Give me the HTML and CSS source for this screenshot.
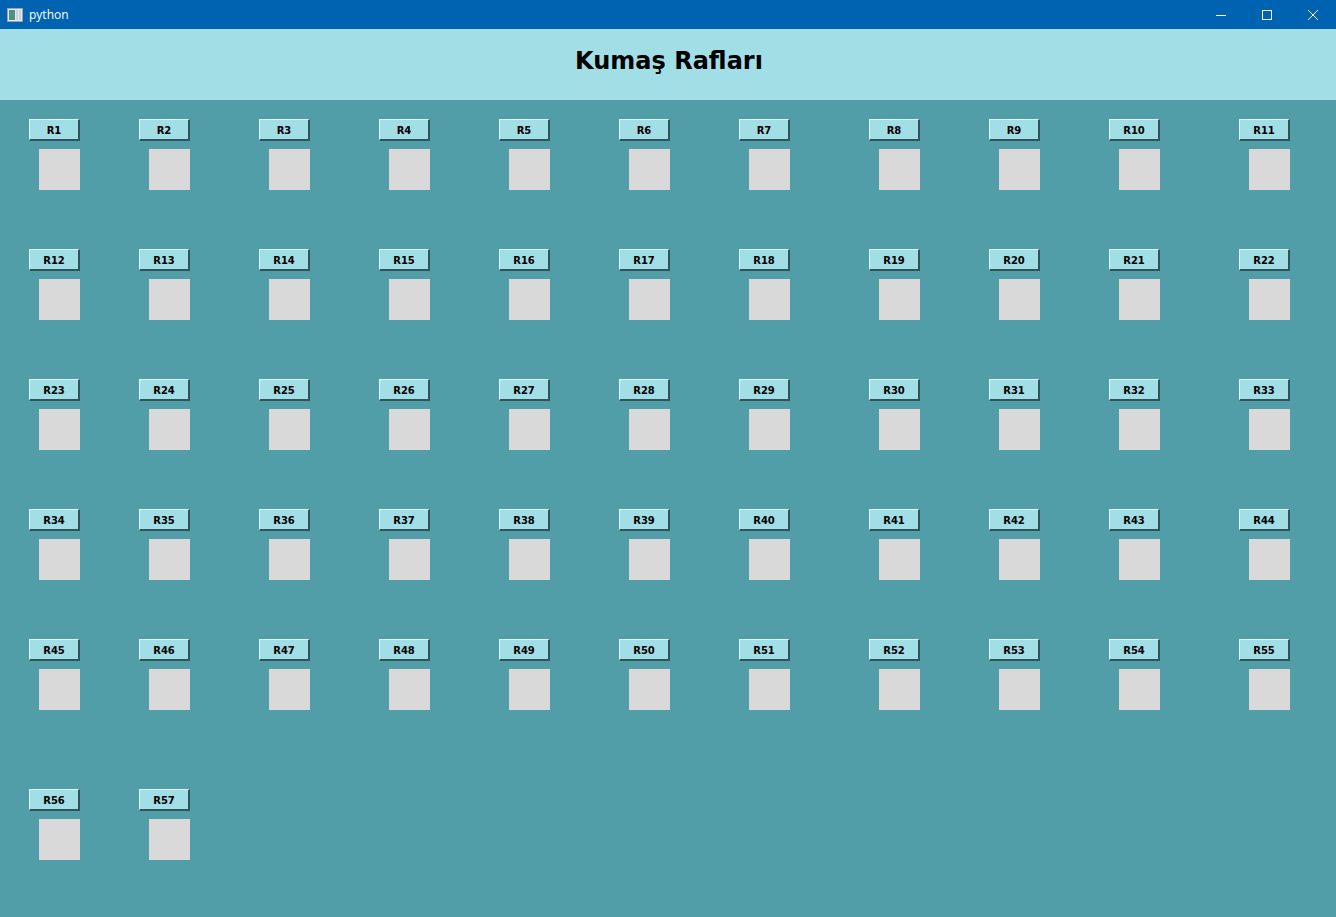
FILE: index.html
```html
<!DOCTYPE html>
<html lang="tr">
<head>
<meta charset="utf-8">
<title>python</title>
<link rel="stylesheet" href="styles.css">
</head>
<body>
<div class="titlebar">
  <div class="tb-left">
    <svg class="app-icon" width="16" height="14" viewBox="0 0 16 14">
      <rect x="0.5" y="0.5" width="15" height="13" fill="#e8e8e8" stroke="#9aa4ad"/>
      <rect x="2" y="2" width="6" height="10" fill="#4f8f8a"/>
      <rect x="9" y="2" width="2" height="10" fill="#c9d3dc"/>
      <rect x="12" y="2" width="2" height="10" fill="#c9d3dc"/>
    </svg>
    <span class="tb-title">python</span>
  </div>
  <div class="tb-controls">
    <div class="tb-btn"><svg width="10" height="10" viewBox="0 0 10 10"><path d="M0 5.5H10" stroke="#fff" stroke-width="1"/></svg></div>
    <div class="tb-btn"><svg width="10" height="10" viewBox="0 0 10 10"><rect x="0.5" y="0.5" width="9" height="9" fill="none" stroke="#fff" stroke-width="1"/></svg></div>
    <div class="tb-btn"><svg width="10" height="10" viewBox="0 0 10 10"><path d="M0 0L10 10M10 0L0 10" stroke="#fff" stroke-width="1"/></svg></div>
  </div>
</div>
<header class="header">
  <h1 class="title">Kumaş Rafları</h1>
</header>
<main class="shelves" id="shelves"></main>
<script src="script.js"></script>
</body>
</html>
```
FILE: styles.css
```css
html, body {
  margin: 0;
  padding: 0;
}
body {
  width: 1336px;
  height: 917px;
  overflow: hidden;
  background: #519da8;
  font-family: "DejaVu Sans", Verdana, sans-serif;
}
.titlebar {
  height: 29px;
  background: #0063b1;
  display: flex;
  justify-content: space-between;
  align-items: center;
  color: #fff;
}
.tb-left {
  display: flex;
  align-items: center;
  padding-left: 7px;
  gap: 6px;
}
.app-icon {
  display: block;
}
.tb-title {
  font-family: "Open Sans", "Noto Sans", sans-serif;
  font-size: 12px;
  color: #fff;
}
.tb-controls {
  display: flex;
  height: 29px;
}
.tb-btn {
  width: 46px;
  height: 29px;
  display: flex;
  align-items: center;
  justify-content: center;
}
.header {
  height: 71px;
  background: #a2dee6;
  display: flex;
  align-items: center;
  justify-content: center;
}
.title {
  margin: 0 0 8px 0;
  font-family: "DejaVu Sans", Verdana, sans-serif;
  font-weight: bold;
  font-size: 24px;
  color: #000;
  transform: translateX(1px);
}
.shelves {
  display: grid;
  grid-template-columns: 110px 120px 120px 120px 120px 120px 130px 120px 120px 130px auto;
  grid-template-rows: 130px 130px 130px 130px 150px auto;
  padding: 19px 0 0 29px;
}
.cell {
  display: flex;
  flex-direction: column;
  align-items: flex-start;
}
.rbtn {
  box-sizing: border-box;
  width: 51px;
  height: 22px;
  background: #a2dee6;
  border-top: 1px solid #dffaff;
  border-left: 1px solid #dffaff;
  border-right: 2px solid #2f5459;
  border-bottom: 2px solid #2f5459;
  font-family: "DejaVu Sans", Verdana, sans-serif;
  font-weight: bold;
  font-size: 10px;
  color: #000;
  display: flex;
  align-items: center;
  justify-content: center;
  padding-top: 1px;
}
.box {
  width: 41px;
  height: 41px;
  margin: 8px 0 0 10px;
  background: #d9d9d9;
}
```
FILE: script.js
```js
(function () {
  var root = document.getElementById('shelves');
  for (var i = 1; i <= 57; i++) {
    var cell = document.createElement('div');
    cell.className = 'cell';
    var b = document.createElement('div');
    b.className = 'rbtn';
    b.textContent = 'R' + i;
    var s = document.createElement('div');
    s.className = 'box';
    cell.appendChild(b);
    cell.appendChild(s);
    root.appendChild(cell);
  }
})();
```
